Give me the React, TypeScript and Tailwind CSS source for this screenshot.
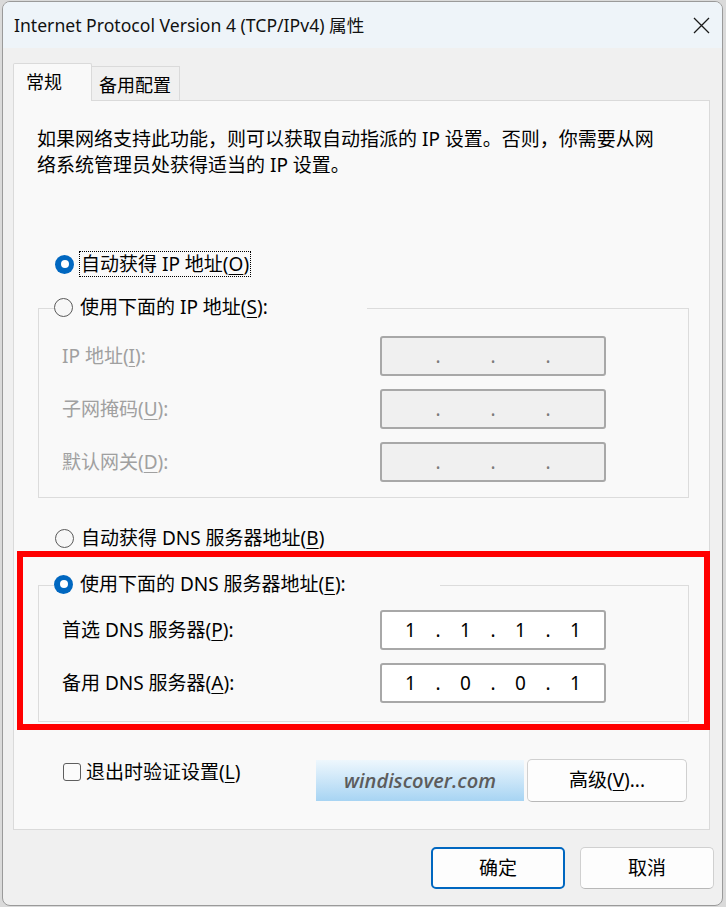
import React from "react";

const Key = ({ k }: { k: string }) => <span className="underline underline-offset-[3px] decoration-1">{k}</span>;

function Radio({ checked }: { checked?: boolean }) {
  if (checked) {
    return (
      <span className="w-[19px] h-[19px] shrink-0 rounded-full bg-[#0067c0] flex items-center justify-center">
        <span className="w-[8px] h-[8px] rounded-full bg-white" />
      </span>
    );
  }
  return <span className="w-[19px] h-[19px] shrink-0 rounded-full border-[1.5px] border-[#5a5a5a] bg-[#f7f7f7]" />;
}

function IpField({ parts, disabled }: { parts: string[]; disabled?: boolean }) {
  const cells: React.ReactNode[] = [];
  parts.forEach((p, i) => {
    cells.push(
      <span key={"s" + i} className="w-[47px] text-center">
        {p}
      </span>
    );
    if (i < 3)
      cells.push(
        <span key={"d" + i} className={"w-[8px] text-center " + (disabled ? "text-[#7a7a7a]" : "")}>
          .
        </span>
      );
  });
  return (
    <div
      className={
        "w-[226px] h-[40px] rounded-[3px] border-2 border-[#a8a8a8] flex items-center pl-[5px] text-[19px] leading-none " +
        (disabled ? "bg-[#f0f0f0]" : "bg-white")
      }
    >
      {cells}
    </div>
  );
}

function FieldRow({ label, parts, disabled }: { label: React.ReactNode; parts: string[]; disabled?: boolean }) {
  return (
    <div className="flex items-center h-[40px]">
      <div className={"w-[341px] pl-[23px] " + (disabled ? "text-[#a0a0a0]" : "text-black")}>{label}</div>
      <IpField parts={parts} disabled={disabled} />
    </div>
  );
}

export default function App() {
  return (
    <div className="w-[726px] h-[907px] bg-[#dadada] pt-[1px] pl-[2px] font-['Noto_Sans','Noto_Sans_CJK_SC',sans-serif] text-[19px] text-black overflow-hidden">
      <div className="w-[721px] h-[905px] rounded-[8px] border border-[#9a9a9a] bg-[#f0f0f0] overflow-hidden flex flex-col">
        {/* title bar */}
        <div className="h-[46px] shrink-0 bg-[#eef4f9] flex items-center pl-[11px] pr-[12px]">
          <span className="text-[17.6px] text-[#111] flex-1">Internet Protocol Version 4 (TCP/IPv4) 属性</span>
          <svg width="17" height="17" viewBox="0 0 17 17">
            <path d="M1 1 L16 16 M16 1 L1 16" stroke="#1a1a1a" strokeWidth="1.3" fill="none" />
          </svg>
        </div>

        {/* tabs */}
        <div className="mt-[15px] ml-[10px] flex items-end h-[38px] -mb-px relative z-10">
          <div className="w-[79px] h-[38px] bg-[#f9f9f9] border-t border-l border-r border-[#dadada] rounded-t-[2px] pl-[12px] pt-[3px] text-[18px] leading-[30px]">
            常规
          </div>
          <div className="w-[88px] h-[34px] mb-px bg-[#f0f0f0] border-t border-r border-[#dadada] pl-[7px] pt-[3px] text-[18px] leading-[30px]">
            备用配置
          </div>
        </div>

        {/* tab panel */}
        <div className="ml-[10px] w-[697px] h-[730px] shrink-0 border border-[#dadada] bg-[#f9f9f9] flex flex-col">
          <p className="mt-[25px] ml-[23px] leading-[26px]">
            如果网络支持此功能，则可以获取自动指派的 IP 设置。否则，你需要从网
            <br />
            络系统管理员处获得适当的 IP 设置。
          </p>

          <div className="mt-[73px] ml-[41px] h-[26px] flex items-center">
            <Radio checked />
            <span className="ml-[5px] h-[26px] px-[1px] border border-dotted border-black leading-[24px]">
              自动获得 IP 地址(<Key k="O" />)
            </span>
          </div>

          {/* static address group */}
          <div className="mt-[31px] ml-[24px] w-[651px] border border-[#dcdcdc] flex flex-col pb-[15px]">
            <div className="relative -mt-[15px] ml-[15px] w-[313px] h-[26px] bg-[#f9f9f9] flex items-center">
              <Radio />
              <span className="ml-[7px] leading-[26px]">
                使用下面的 IP 地址(<Key k="S" />):
              </span>
            </div>
            <div className="mt-[16px] flex flex-col gap-[13px]">
              <FieldRow disabled parts={["", "", "", ""]} label={<>IP 地址(<Key k="I" />):</>} />
              <FieldRow disabled parts={["", "", "", ""]} label={<>子网掩码(<Key k="U" />):</>} />
              <FieldRow disabled parts={["", "", "", ""]} label={<>默认网关(<Key k="D" />):</>} />
            </div>
          </div>

          <div className="mt-[27px] ml-[41px] h-[26px] flex items-center">
            <Radio />
            <span className="ml-[7px] leading-[26px]">
              自动获得 DNS 服务器地址(<Key k="B" />)
            </span>
          </div>

          {/* DNS group, outlined in red */}
          <div className="ml-[3px] w-[693px] h-[179px] shrink-0 border-[6px] border-[#ff0000] flex flex-col">
            <div className="mt-[28px] ml-[15px] w-[651px] border border-[#dcdcdc] flex flex-col pb-[18px]">
              <div className="relative -mt-[15px] ml-[15px] w-[386px] h-[26px] bg-[#f9f9f9] flex items-center">
                <Radio checked />
                <span className="ml-[7px] leading-[26px]">
                  使用下面的 DNS 服务器地址(<Key k="E" />):
                </span>
              </div>
              <div className="mt-[13px] flex flex-col gap-[13px]">
                <FieldRow parts={["1", "1", "1", "1"]} label={<>首选 DNS 服务器(<Key k="P" />):</>} />
                <FieldRow parts={["1", "0", "0", "1"]} label={<>备用 DNS 服务器(<Key k="A" />):</>} />
              </div>
            </div>
          </div>

          <div className="mt-[29px] flex items-start">
            <div className="ml-[49px] h-[26px] flex items-center">
              <span className="w-[18px] h-[18px] rounded-[3px] border border-[#5e5e5e] bg-[#fbfbfb]" />
              <span className="ml-[5px] leading-[26px]">
                退出时验证设置(<Key k="L" />)
              </span>
            </div>
            <div className="flex-1" />
            <div className="flex items-start gap-[3px] mr-[22px]">
              <div className="mt-[1px] w-[208px] h-[41px] bg-gradient-to-b from-[#eef7fd] to-[#a7d4f3] flex items-center justify-center">
                <span className="font-['Open_Sans',sans-serif] italic font-semibold text-[20px] text-[#5c5c5c]">
                  windiscover.com
                </span>
              </div>
              <div className="w-[160px] h-[43px] rounded-[5px] border border-[#d0d0d0] border-b-[#b8b8b8] bg-[#fdfdfd] flex items-center justify-center">
                高级(<Key k="V" />)...
              </div>
            </div>
          </div>
        </div>

        {/* dialog buttons */}
        <div className="mt-[17px] mr-[8px] flex justify-end gap-[15px]">
          <div className="w-[134px] h-[42px] rounded-[5px] border-2 border-[#0067c0] bg-[#fdfdfd] flex items-center justify-center">
            确定
          </div>
          <div className="w-[134px] h-[42px] rounded-[5px] border border-[#d0d0d0] border-b-[#b8b8b8] bg-[#fdfdfd] flex items-center justify-center">
            取消
          </div>
        </div>
      </div>
    </div>
  );
}
